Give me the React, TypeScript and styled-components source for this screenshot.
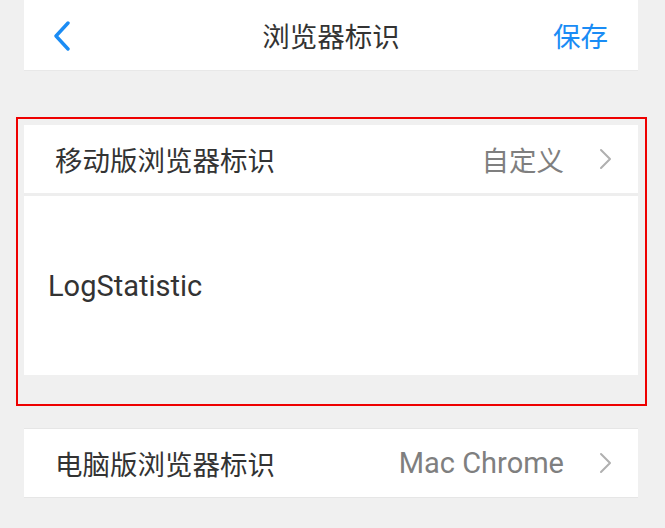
import React from 'react'
import styled, { createGlobalStyle } from 'styled-components'

const GlobalStyle = createGlobalStyle`
  html, body {
    margin: 0;
    padding: 0;
    background: #f0f0f0;
  }
  body {
    font-family: Roboto, "Noto Sans CJK SC", sans-serif;
  }
`

const BackIcon = () => (
  <svg width="22" height="30" viewBox="0 0 22 30">
    <path d="M17 2 L5 15 L17 28" fill="none" stroke="#1b8cf4" strokeWidth="3.4" strokeLinecap="round" strokeLinejoin="round" />
  </svg>
)

const ArrowIcon = () => (
  <svg width="13" height="22" viewBox="0 0 13 22">
    <path d="M2 2 L11 11 L2 20" fill="none" stroke="#b0b0b0" strokeWidth="2" strokeLinecap="round" strokeLinejoin="round" />
  </svg>
)

type RowProps = {
  label: string
  value: string
  latin?: boolean
}

const Row = (props: RowProps) => (
  <RowBox>
    <Label>{props.label}</Label>
    <Value latin={props.latin}>{props.value}</Value>
    <ArrowIcon />
  </RowBox>
)

const App = () => {
  return (
    <>
      <GlobalStyle />
      <Page>
        <Header>
          <BackButton><BackIcon /></BackButton>
          <Title>浏览器标识</Title>
          <Save>保存</Save>
        </Header>
        <Highlight>
          <Card>
            <Row label="移动版浏览器标识" value="自定义" />
            <Divider />
            <UaText>LogStatistic</UaText>
          </Card>
        </Highlight>
        <SecondCard>
          <Row label="电脑版浏览器标识" value="Mac Chrome" latin />
        </SecondCard>
      </Page>
    </>
  )
}

export default App

const Page = styled.div`
  width: 614px;
  height: 528px;
  padding-left: 24px;
  display: flex;
  flex-direction: column;
`

const Header = styled.header`
  height: 70px;
  background: #ffffff;
  border-bottom: 1px solid #e8e8e8;
  display: flex;
  align-items: center;
  justify-content: space-between;
  padding: 0 30px 0 27px;
  position: relative;
`

const BackButton = styled.div`
  display: flex;
  align-items: center;
  margin-top: 2px;
`

const Title = styled.h1`
  position: absolute;
  left: 0;
  right: 0;
  text-align: center;
  margin: 0;
  font-family: "Noto Sans CJK SC", sans-serif;
  font-size: 27.5px;
  font-weight: 400;
  color: #333333;
  pointer-events: none;
`

const Save = styled.span`
  font-family: "Noto Sans CJK SC", sans-serif;
  font-size: 27.5px;
  color: #1a8cf5;
`

const Highlight = styled.div`
  margin: 46px 0 0 -8px;
  width: 631px;
  height: 289px;
  border: 2px solid #ee0000;
  padding: 6px 0 0 6px;
  box-sizing: border-box;
`

const Card = styled.div`
  width: 614px;
  background: #ffffff;
  display: flex;
  flex-direction: column;
`

const RowBox = styled.div`
  height: 68px;
  display: flex;
  align-items: center;
  padding: 0 26px 0 31px;
  background: #ffffff;
`

const Label = styled.span`
  flex: 1;
  font-family: "Noto Sans CJK SC", sans-serif;
  font-size: 27.5px;
  color: #333333;
`

const Value = styled.span<{ latin?: boolean }>`
  font-family: ${(p) => (p.latin ? 'Roboto, sans-serif' : '"Noto Sans CJK SC", sans-serif')};
  font-size: ${(p) => (p.latin ? '29px' : '27.5px')};
  color: #7f7f7f;
  margin-right: 35px;
`

const Divider = styled.div`
  height: 3px;
  background: #eeeeee;
`

const UaText = styled.div`
  height: 179px;
  display: flex;
  align-items: center;
  padding-left: 24px;
  font-family: Roboto, sans-serif;
  font-size: 29px;
  color: #333333;
`

const SecondCard = styled.div`
  margin-top: 22px;
  border-top: 1px solid #e6e6e6;
  border-bottom: 1px solid #e6e6e6;
`
